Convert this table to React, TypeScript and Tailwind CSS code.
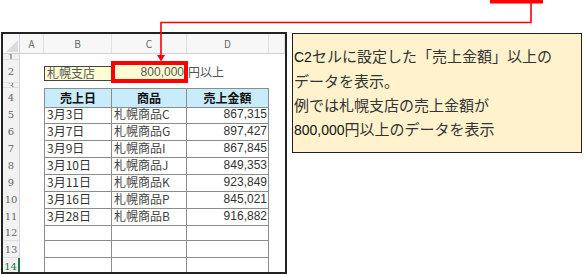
const jp = "font-['Noto_Sans_CJK_JP','Noto_Sans',sans-serif]"

const rows = [
  { n: '5', date: '3月3日', item: '札幌商品C', amt: '867,315' },
  { n: '6', date: '3月7日', item: '札幌商品G', amt: '897,427' },
  { n: '7', date: '3月9日', item: '札幌商品I', amt: '867,845' },
  { n: '8', date: '3月10日', item: '札幌商品J', amt: '849,353' },
  { n: '9', date: '3月11日', item: '札幌商品K', amt: '923,849' },
  { n: '10', date: '3月16日', item: '札幌商品P', amt: '845,021' },
  { n: '11', date: '3月28日', item: '札幌商品B', amt: '916,882' },
  { n: '12', date: '', item: '', amt: '' },
  { n: '13', date: '', item: '', amt: '' },
  { n: '14', date: '', item: '', amt: '' },
]

const grid = 'grid grid-cols-[17px_24px_68px_75px_82px_1fr]'

function RowHead({ n, active }: { n: string; active?: boolean }) {
  return (
    <div
      className={`flex items-center justify-center overflow-hidden bg-[#f2f2f2] border-b border-[#dedede] text-[10px] font-['DejaVu_Serif',serif] ${
        active ? 'text-[#217346] border-r-2 border-r-[#217346]' : 'text-[#666] border-r border-r-[#d4d4d4]'
      }`}
    >
      {n}
    </div>
  )
}

function Sheet() {
  return (
    <div className={`w-[286px] h-[242px] border-2 border-[#222] bg-white overflow-hidden ${jp}`}>
      {/* column headers */}
      <div className={`${grid} h-[20px] bg-[#f7f7f7] border-b border-[#cfcfcf] text-[10px] text-[#666]`}>
        <div className="relative border-r border-[#d4d4d4] overflow-hidden">
          <div className="absolute right-[1px] bottom-[1px] w-0 h-0 border-l-[12px] border-l-transparent border-b-[12px] border-b-[#dcdcdc]" />
        </div>
        {['A', 'B', 'C', 'D', ''].map((c, i) => (
          <div key={i} className="flex items-center justify-center border-r border-[#e0e0e0]">
            {c}
          </div>
        ))}
      </div>

      {/* row 1 */}
      <div className={`${grid} h-[6px]`}>
        <RowHead n="1" />
      </div>

      {/* row 2 */}
      <div className={`${grid} h-[23px]`}>
        <RowHead n="2" />
        <div />
        <div className="flex items-center">
          <div className="w-full h-[15px] mt-[3px] bg-[#fefed2] border border-[#444] flex items-center pl-[2px] text-[12px] text-[#555]">
            札幌支店
          </div>
        </div>
        <div className="relative -ml-[1px] mt-[1px] h-[22px] w-[77px] bg-[#fefed2] border-4 border-[#ff0000] flex items-center justify-end text-[12px] text-[#555] pr-[0px] font-['Liberation_Sans',sans-serif]">
          800,000
        </div>
        <div className="flex items-center pl-[1px] text-[12px] text-[#555]">円以上</div>
      </div>

      {/* row 3 */}
      <div className={`${grid} h-[5px]`}>
        <RowHead n="3" />
      </div>

      {/* table header row 4 */}
      <div className={`${grid} h-[17px]`}>
        <RowHead n="4" />
        <div />
        {['売上日', '商品', '売上金額'].map((h, i) => (
          <div
            key={h}
            className={`flex items-center justify-center bg-[#c9ecfb] border-t border-b border-r border-[#8c8c8c] text-[12px] font-bold text-[#111] ${
              i === 0 ? 'border-l' : ''
            }`}
          >
            {h}
          </div>
        ))}
      </div>

      {rows.map((r) => (
        <div key={r.n} className={`${grid} h-[17px]`}>
          <RowHead n={r.n} active={r.n === '14'} />
          <div />
          <div className="flex items-center pl-[2px] border-l border-r border-b border-[#8c8c8c] text-[12px] text-[#333]">
            {r.date}
          </div>
          <div className="flex items-center pl-[2px] border-r border-b border-[#8c8c8c] text-[12px] text-[#444]">
            {r.item}
          </div>
          <div className="flex items-center justify-end pr-[1px] border-r border-b border-[#8c8c8c] text-[12px] text-[#333] font-['Liberation_Sans',sans-serif]">
            {r.amt}
          </div>
        </div>
      ))}
    </div>
  )
}

function Note() {
  return (
    <div
      className={`ml-[5px] mt-[1px] w-[290px] h-[120px] bg-[#fff2cc] border-[1.5px] border-[#222] pt-[10px] pl-[1px] text-[15px] leading-[24px] text-[#333] ${jp}`}
    >
      <div>
        <span className="font-['Liberation_Sans',sans-serif] text-[14px] text-[#111]">C2</span>
        セルに設定した「売上金額」以上の
      </div>
      <div>データを表示。</div>
      <div>例では札幌支店の売上金額が</div>
      <div>
        <span className="font-['Liberation_Sans',sans-serif] text-[14px] text-[#111]">800,000</span>
        円以上のデータを表示
      </div>
    </div>
  )
}

export default function App() {
  return (
    <div className="relative w-[584px] h-[275px] bg-white overflow-hidden">
      <div className="flex items-start pt-[32px] pl-[1px]">
        <Sheet />
        <Note />
      </div>
      <svg className="absolute inset-0 pointer-events-none" width="584" height="275" viewBox="0 0 584 275">
        <rect x="490" y="0" width="53" height="3.5" fill="#ff0000" />
        <polyline
          points="531,0 531,22.5 161,22.5 161,56"
          fill="none"
          stroke="#ff0000"
          strokeWidth="1.6"
        />
        <polygon points="157,55 165,55 161,61.5" fill="#ff0000" />
      </svg>
    </div>
  )
}
